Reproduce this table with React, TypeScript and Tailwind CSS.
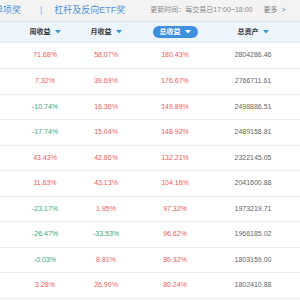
const rows: [string, string, string, string][] = [
  ["71.68%", "58.07%", "180.43%", "2804286.46"],
  ["7.32%", "39.69%", "176.67%", "2766711.61"],
  ["-10.74%", "16.36%", "149.89%", "2498886.51"],
  ["-17.74%", "15.04%", "148.92%", "2489158.81"],
  ["43.43%", "42.86%", "132.21%", "2322145.05"],
  ["11.63%", "43.13%", "104.16%", "2041600.88"],
  ["-23.17%", "1.95%", "97.32%", "1973219.71"],
  ["-26.47%", "-33.53%", "96.62%", "1966185.02"],
  ["-0.03%", "8.81%", "80.32%", "1803159.00"],
  ["3.28%", "26.90%", "80.24%", "1802410.88"],
];

const cols = "grid grid-cols-[60px_62px_76px_80px] pl-[15px]";

function Pct({ v }: { v: string }) {
  const down = v.startsWith("-");
  return <div className={down ? "text-center text-[#35a97a]" : "text-center text-[#ec5b5b]"}>{v}</div>;
}

function Caret({ white }: { white?: boolean }) {
  return (
    <svg width="6" height="4" viewBox="0 0 6 4" className="ml-[4px]">
      <path d="M0 0 H6 L3 3.5 Z" fill={white ? "#ffffff" : "#3d8fe0"} />
    </svg>
  );
}

export default function App() {
  return (
    <div className="w-[300px] h-[300px] overflow-hidden bg-white font-['Liberation_Sans','Noto_Sans_CJK_SC',sans-serif]">
      {/* tabs */}
      <div className="flex h-[22px] items-center border-b border-[#d4e4f4] bg-[#f3f3f3]">
        <div className="ml-[-6px] text-[9px] text-[#4a8fd8]">单项奖</div>
        <div className="ml-[19px] text-[9px] text-[#7aaee6]">|</div>
        <div className="ml-[12px] text-[9px] text-[#4a8fd8]">杠杆及反向ETF奖</div>
        <div className="ml-[25px] text-[7px] text-[#888]">更新时间：每交易日17:00~18:00</div>
        <div className="ml-[11px] flex items-center text-[7px] text-[#777]">
          更多<span className="ml-[4px] text-[#3d8fe0]">&gt;</span>
        </div>
      </div>

      {/* header */}
      <div className={cols + " h-[21px] items-center border-b border-[#dde9f5] bg-[#edf4fc] text-[7px] font-bold text-[#333]"}>
        <div className="flex items-center justify-center">周收益<Caret /></div>
        <div className="flex items-center justify-center">月收益<Caret /></div>
        <div className="flex items-center justify-center">
          <div className="flex h-[12px] items-center rounded-full bg-[#3d8fe0] px-[7px] text-white">
            总收益<Caret white />
          </div>
        </div>
        <div className="flex items-center justify-center">总资产<Caret /></div>
      </div>

      {/* rows */}
      {rows.map((r, i) => (
        <div
          key={i}
          className={cols + (i === 0 ? " h-[26px]" : " h-[25.5px]") + " items-center border-b border-[#ececec] text-[7px]"}
        >
          <Pct v={r[0]} />
          <Pct v={r[1]} />
          <Pct v={r[2]} />
          <div className="text-center text-[#666]">{r[3]}</div>
        </div>
      ))}
    </div>
  );
}
